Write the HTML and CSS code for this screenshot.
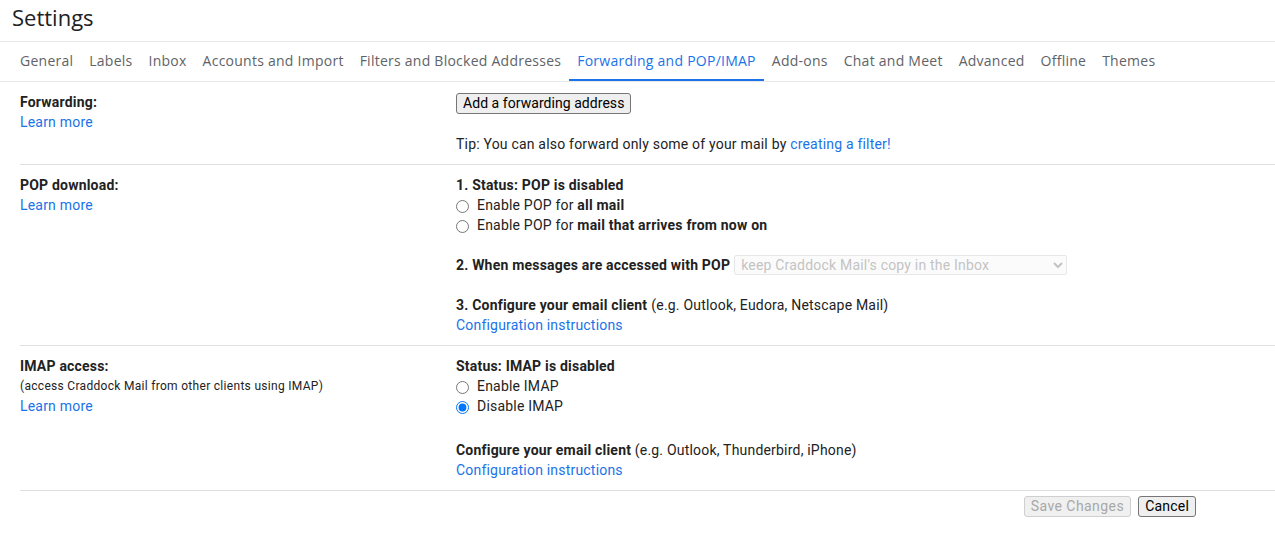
FILE: index.html
```html
<!DOCTYPE html>
<html>
<head>
<meta charset="utf-8">
<title>Settings</title>
<link rel="stylesheet" href="styles.css">
</head>
<body>
<header class="title-bar"><h1 class="title">Settings</h1></header>
<nav class="tabs">
  <a class="tab">General</a>
  <a class="tab">Labels</a>
  <a class="tab">Inbox</a>
  <a class="tab">Accounts and Import</a>
  <a class="tab">Filters and Blocked Addresses</a>
  <a class="tab active">Forwarding and POP/IMAP</a>
  <a class="tab">Add-ons</a>
  <a class="tab">Chat and Meet</a>
  <a class="tab">Advanced</a>
  <a class="tab">Offline</a>
  <a class="tab">Themes</a>
</nav>
<main class="content">
  <section class="row">
    <div class="label">
      <div class="label-title">Forwarding:</div>
      <a class="link">Learn more</a>
    </div>
    <div class="value">
      <div class="btn-line"><button class="btn btn-add">Add a forwarding address</button></div>
      <div class="tip">Tip: You can also forward only some of your mail by <a class="link">creating a filter!</a></div>
    </div>
  </section>
  <section class="row">
    <div class="label">
      <div class="label-title">POP download:</div>
      <a class="link">Learn more</a>
    </div>
    <div class="value">
      <div class="strong">1. Status: POP is disabled</div>
      <label class="radio"><input type="radio" name="pop"> <span>Enable POP for <b>all mail</b></span></label>
      <label class="radio"><input type="radio" name="pop"> <span>Enable POP for <b>mail that arrives from now on</b></span></label>
      <div class="step"><b>2. When messages are accessed with POP</b> <select class="sel" disabled><option>keep Craddock Mail's copy in the Inbox</option></select></div>
      <div class="step"><b>3. Configure your email client</b> (e.g. Outlook, Eudora, Netscape Mail)</div>
      <a class="link block">Configuration instructions</a>
    </div>
  </section>
  <section class="row">
    <div class="label">
      <div class="label-title">IMAP access:</div>
      <div class="small">(access Craddock Mail from other clients using IMAP)</div>
      <a class="link block">Learn more</a>
    </div>
    <div class="value">
      <div class="strong">Status: IMAP is disabled</div>
      <label class="radio"><input type="radio" name="imap"> <span>Enable IMAP</span></label>
      <label class="radio"><input type="radio" name="imap" checked> <span>Disable IMAP</span></label>
      <div class="step2"><b>Configure your email client</b> (e.g. Outlook, Thunderbird, iPhone)</div>
      <a class="link block">Configuration instructions</a>
    </div>
  </section>
  <div class="actions">
    <button class="btn btn-save" disabled>Save Changes</button>
    <button class="btn">Cancel</button>
  </div>
</main>
</body>
</html>
```

FILE: styles.css
```css
html, body {
  margin: 0;
  padding: 0;
  background: #fff;
}
body {
  font-family: Roboto, "Liberation Sans", Arial, sans-serif;
  font-size: 14px;
  line-height: 20px;
  letter-spacing: 0.2px;
  color: #222;
}
.title-bar {
  border-bottom: 1px solid #e8e8e8;
  box-sizing: border-box;
  height: 42px;
}
.title {
  margin: 0;
  padding: 3px 0 0 12px;
  font-family: "Open Sans", sans-serif;
  font-weight: 400;
  font-size: 22px;
  line-height: 28px;
  letter-spacing: 0;
  color: #202124;
}
.tabs {
  display: flex;
  padding-left: 12px;
  height: 40px;
  box-sizing: border-box;
  border-bottom: 1px solid #e8e8e8;
}
.tab {
  display: block;
  padding: 0 8px;
  font-family: "Open Sans", sans-serif;
  font-size: 14px;
  font-weight: 500;
  line-height: 37px;
  height: 37px;
  color: #5f6368;
  border-bottom: 2px solid transparent;
  letter-spacing: 0.25px;
  white-space: nowrap;
}
.tab.active {
  color: #1a73e8;
  border-bottom-color: #1a73e8;
}
.content {
  padding-left: 20px;
}
.row {
  display: grid;
  grid-template-columns: 436px 1fr;
  padding: 10px 0;
  border-bottom: 1px solid #e0e0e0;
}
.label-title {
  font-weight: 700;
  color: #222;
}
.link {
  color: #1a73e8;
  text-decoration: none;
  cursor: pointer;
}
.block {
  display: block;
}
.small {
  font-size: 12px;
  line-height: 20px;
  letter-spacing: 0.3px;
}
.btn-line {
  padding-top: 1px;
  height: 21px;
}
.tip {
  margin-top: 20px;
}
.strong {
  font-weight: 700;
}
.radio {
  display: flex;
  align-items: center;
  height: 20px;
}
.radio input {
  margin: 2px 8px 0 0;
  width: 13px;
  height: 13px;
}
.step {
  margin-top: 20px;
  display: flex;
  align-items: center;
  gap: 4px;
  height: 20px;
}
.step2 {
  margin-top: 24px;
}
.sel {
  width: 333px;
  height: 20px;
  font-family: Roboto, "Liberation Sans", Arial, sans-serif;
  font-size: 14px;
  letter-spacing: 0.2px;
  color: #aaa;
  background: #fafafa;
  border: 1px solid #ddd;
  border-radius: 2px;
  padding: 0 2px;
  margin-top: 0;
}
.btn {
  font-family: Roboto, "Liberation Sans", Arial, sans-serif;
  font-size: 14px;
  letter-spacing: 0.2px;
  line-height: 17px;
  padding: 1px 6px;
  border: 1px solid #767676;
  border-radius: 3px;
  background: #efefef;
  color: #000;
}
.btn-add {
  letter-spacing: 0.05px;
}
.btn-save {
  letter-spacing: 0.45px;
}
.btn:disabled {
  color: #a8a8a8;
  border-color: #cfcfcf;
  background: #f0f0f0;
}
.actions {
  display: flex;
  justify-content: flex-end;
  gap: 7px;
  padding: 5px 79px 0 0;
}
```
